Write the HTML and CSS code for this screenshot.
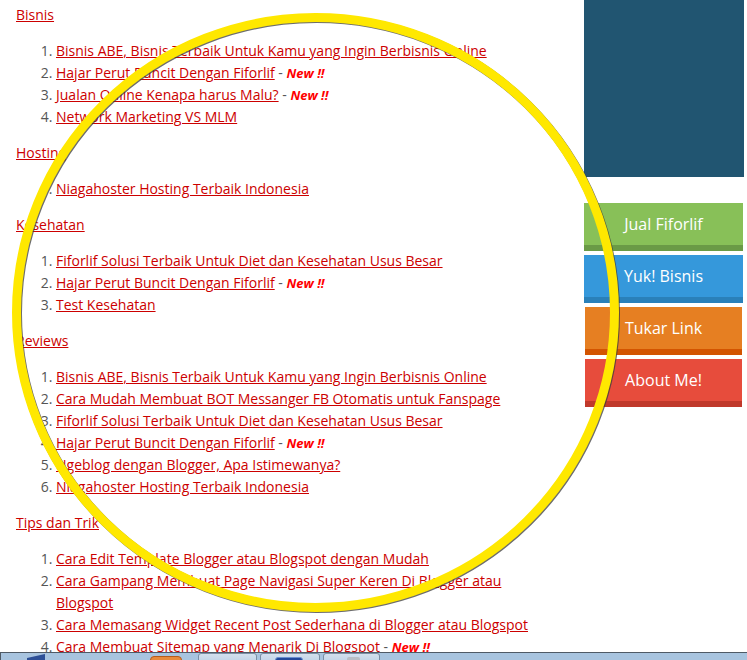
FILE: index.html
```html
<!DOCTYPE html>
<html lang="id">
<head>
<meta charset="utf-8">
<title>Daftar Isi</title>
<link rel="stylesheet" href="styles.css">
</head>
<body>
<div class="page">
  <main class="main">
    <section class="cat">
      <a class="cat-title" href="#">Bisnis</a>
      <ol class="posts">
        <li><a href="#">Bisnis ABE, Bisnis Terbaik Untuk Kamu yang Ingin Berbisnis Online</a></li>
        <li><a href="#">Hajar Perut Buncit Dengan Fiforlif</a> - <em class="new">New !!</em></li>
        <li><a href="#">Jualan Online Kenapa harus Malu?</a> - <em class="new">New !!</em></li>
        <li><a href="#">Network Marketing VS MLM</a></li>
      </ol>
    </section>
    <section class="cat">
      <a class="cat-title" href="#">Hosting</a>
      <ol class="posts">
        <li><a href="#">Niagahoster Hosting Terbaik Indonesia</a></li>
      </ol>
    </section>
    <section class="cat">
      <a class="cat-title" href="#">Kesehatan</a>
      <ol class="posts">
        <li><a href="#">Fiforlif Solusi Terbaik Untuk Diet dan Kesehatan Usus Besar</a></li>
        <li><a href="#">Hajar Perut Buncit Dengan Fiforlif</a> - <em class="new">New !!</em></li>
        <li><a href="#">Test Kesehatan</a></li>
      </ol>
    </section>
    <section class="cat">
      <a class="cat-title" href="#">Reviews</a>
      <ol class="posts">
        <li><a href="#">Bisnis ABE, Bisnis Terbaik Untuk Kamu yang Ingin Berbisnis Online</a></li>
        <li><a href="#">Cara Mudah Membuat BOT Messanger FB Otomatis untuk Fanspage</a></li>
        <li><a href="#">Fiforlif Solusi Terbaik Untuk Diet dan Kesehatan Usus Besar</a></li>
        <li><a href="#">Hajar Perut Buncit Dengan Fiforlif</a> - <em class="new">New !!</em></li>
        <li><a href="#">Ngeblog dengan Blogger, Apa Istimewanya?</a></li>
        <li><a href="#">Niagahoster Hosting Terbaik Indonesia</a></li>
      </ol>
    </section>
    <section class="cat">
      <a class="cat-title" href="#">Tips dan Trik</a>
      <ol class="posts">
        <li><a href="#">Cara Edit Template Blogger atau Blogspot dengan Mudah</a></li>
        <li><a href="#">Cara Gampang Membuat Page Navigasi Super Keren Di Blogger atau Blogspot</a></li>
        <li><a href="#">Cara Memasang Widget Recent Post Sederhana di Blogger atau Blogspot</a></li>
        <li><a href="#">Cara Membuat Sitemap yang Menarik Di Blogspot</a> - <em class="new">New !!</em></li>
      </ol>
    </section>
  </main>
  <aside class="sidebar">
    <div class="banner"></div>
    <nav class="menu">
      <a class="menu-btn green" href="#">Jual Fiforlif</a>
      <a class="menu-btn blue" href="#">Yuk! Bisnis</a>
      <a class="menu-btn orange" href="#">Tukar Link</a>
      <a class="menu-btn red" href="#">About Me!</a>
    </nav>
  </aside>
</div>

<svg class="ring" viewBox="0 0 747 660" width="747" height="660" aria-hidden="true">
  <ellipse cx="315.5" cy="312.5" rx="299" ry="295" fill="none" stroke="#ffe800" stroke-width="9"/>
</svg>

<div class="taskbar">
  <svg class="tb-start" width="18" height="7" viewBox="0 0 18 7"><polygon points="0,7 0,5 18,1 18,7" fill="#2d4f96"/></svg>
  <span class="tb-orange"></span>
  <span class="tb-btn tb-b1"></span>
  <span class="tb-btn tb-b2"><span class="tb-icon-blue"></span></span>
  <span class="tb-btn tb-b3"><span class="tb-icon-gray"></span></span>
</div>
</body>
</html>
```
FILE: styles.css
```css
html, body {
  margin: 0;
  padding: 0;
  background: #ffffff;
}

body {
  font-family: "Open Sans", "Noto Sans", sans-serif;
  font-size: 14px;
  line-height: 22px;
  color: #555555;
  overflow: hidden;
}

.page {
  display: flex;
  align-items: flex-start;
}

.main {
  width: 534px;
  padding: 4px 0 0 16px;
}

.cat-title {
  color: #cc0000;
  text-decoration: underline;
}

.posts {
  margin: 14px 0;
  padding-left: 40px;
}

.posts li {
  color: #555555;
}

.posts a {
  color: #cc0000;
  text-decoration: underline;
}

.new {
  color: #ff0000;
  font-size: 13px;
  font-weight: bold;
  font-style: italic;
}

.sidebar {
  margin-left: 34px;
  width: 160px;
}

.banner {
  height: 177px;
  background: #215571;
  margin-bottom: 26px;
}

.menu {
  display: flex;
  flex-direction: column;
  gap: 4px;
}

.menu-btn {
  display: block;
  height: 42px;
  line-height: 42px;
  text-align: center;
  color: #ffffff;
  font-size: 16px;
  text-decoration: none;
  border-bottom: 6px solid;
}

.green {
  width: 159px;
  background: #88c058;
  border-color: #6a9a46;
}

.blue {
  width: 159px;
  background: #3598db;
  border-color: #2a80b9;
}

.orange {
  width: 157px;
  margin-left: 1px;
  background: #e67f22;
  border-color: #d35400;
}

.red {
  width: 157px;
  margin-left: 1px;
  background: #e74c3c;
  border-color: #c0392b;
}

.ring {
  position: absolute;
  left: 0;
  top: 0;
  pointer-events: none;
  filter: drop-shadow(1px 1.5px 0.6px rgba(60, 60, 60, 0.75));
}

.taskbar {
  position: fixed;
  left: 0;
  right: 0;
  bottom: 0;
  height: 8px;
  box-sizing: border-box;
  border-top: 1px solid #4f5a66;
  border-left: 1px solid #4f5a66;
  background: #a8c4df;
  display: flex;
  align-items: flex-start;
  overflow: hidden;
}

.tb-start {
  margin-left: 26px;
  display: block;
}

.tb-orange {
  margin-left: 105px;
  margin-top: 3px;
  width: 30px;
  height: 10px;
  background: #e88a3c;
  border: 1px solid #b45c1c;
  border-radius: 4px 4px 0 0;
}

.tb-btn {
  margin-top: 0;
  height: 12px;
  box-sizing: border-box;
  border: 1px solid #7a8ea4;
  border-radius: 3px 3px 0 0;
  background: linear-gradient(#d3e0ee, #bcd0e5);
  position: relative;
}

.tb-b1 {
  margin-left: 16px;
  width: 59px;
}

.tb-b2 {
  margin-left: 3px;
  width: 60px;
}

.tb-b3 {
  margin-left: 3px;
  width: 57px;
}

.tb-icon-blue {
  display: block;
  margin: 3px 0 0 14px;
  width: 28px;
  height: 8px;
  background: #23489a;
  border: 1px solid #6a8fd0;
  box-sizing: border-box;
  border-radius: 3px 3px 0 0;
}

.tb-icon-gray {
  display: block;
  margin: 3px 0 0 23px;
  width: 13px;
  height: 8px;
  background: #b8bec6;
  border-radius: 2px 2px 0 0;
}
```
